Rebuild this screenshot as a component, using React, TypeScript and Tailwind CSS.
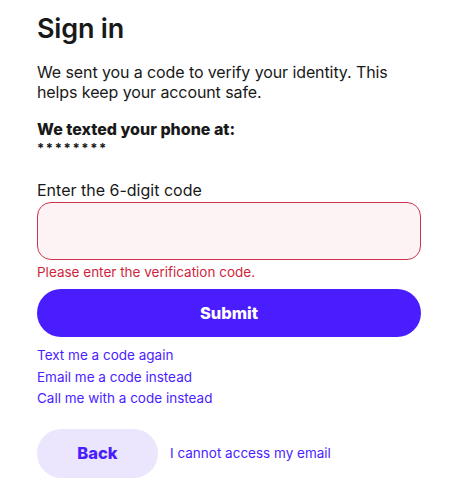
import { useState } from "react";

const font = { fontFamily: "Inter, 'Liberation Sans', sans-serif" };

export default function App() {
  const [code, setCode] = useState("");

  return (
    <div className="min-h-[494px] bg-white text-[#191919]" style={font}>
      <div className="w-[384px] pl-[37px] pt-[12px] box-content">
        <h1 className="text-[27px] font-semibold leading-[34px] tracking-[-0.2px]">Sign in</h1>
        <p className="mt-[16px] text-[16px] leading-[20px] tracking-[-0.1px]">
          We sent you a code to verify your identity. This helps keep your account safe.
        </p>
        <p className="mt-[18px] text-[16px] font-extrabold leading-[18px]">We texted your phone at:</p>
        <p className="mt-[4px] text-[13px] font-bold leading-[13px] tracking-[1.6px]">********</p>

        <label className="mt-[25px] block text-[16px] leading-[20px]" htmlFor="code">
          Enter the 6-digit code
        </label>
        <input
          id="code"
          className="mt-[2px] block h-[58px] w-full rounded-[14px] border border-[#d0354f] bg-[#fdf3f4] px-4 outline-none"
          value={code}
          onChange={(e) => setCode(e.target.value)}
        />
        <p className="mt-[3px] text-[13.5px] leading-[18px] text-[#cf1f3d]">Please enter the verification code.</p>

        <button className="mt-[8px] h-[48px] w-full rounded-full bg-[#4a1dff] text-[16.5px] font-extrabold text-white" type="button">
          Submit
        </button>

        <div className="mt-[8px] flex flex-col text-[13.5px] leading-[21.5px] text-[#4a1dff]">
          <a href="#">Text me a code again</a>
          <a href="#">Email me a code instead</a>
          <a href="#">Call me with a code instead</a>
        </div>

        <div className="mt-[19px] flex items-center gap-[12px]">
          <button className="h-[49px] w-[121px] rounded-full bg-[#ebe6fd] text-[16.5px] font-extrabold text-[#4a1dff]" type="button">
            Back
          </button>
          <a className="text-[13.5px] text-[#4a1dff]" href="#">
            I cannot access my email
          </a>
        </div>
      </div>
    </div>
  );
}
